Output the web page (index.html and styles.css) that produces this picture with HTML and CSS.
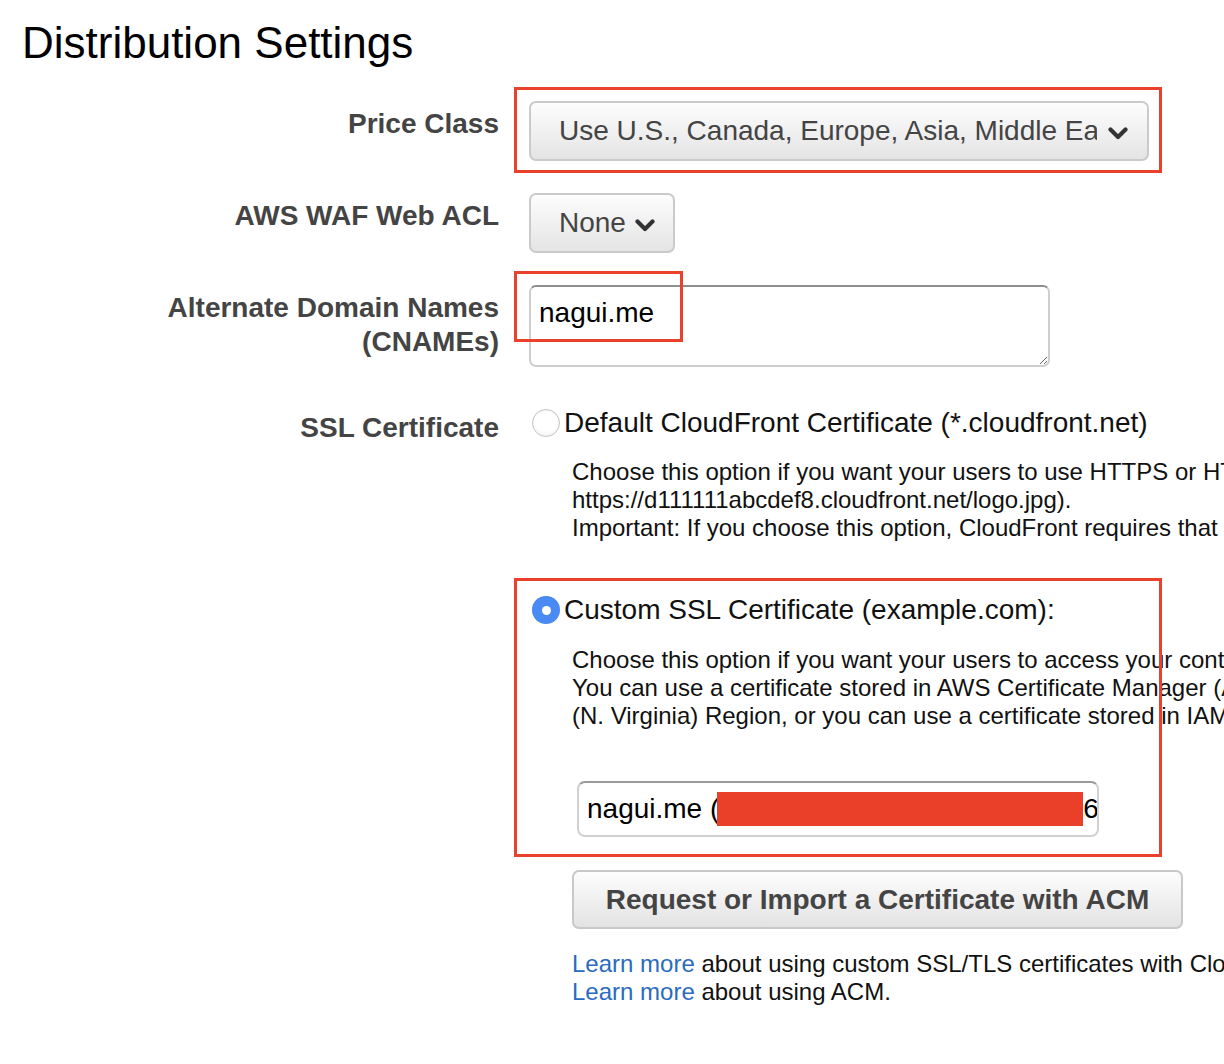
FILE: index.html
```html
<!DOCTYPE html>
<html lang="en">
<head>
<meta charset="utf-8">
<title>Distribution Settings</title>
<link rel="stylesheet" href="styles.css">
</head>
<body>
<h1 class="title">Distribution Settings</h1>
<div class="form">
  <div class="row row-price">
    <div class="label">Price Class</div>
    <div class="field">
      <div class="select-wrap">
        <div class="select select-wide">
          <span class="select-text">Use U.S., Canada, Europe, Asia, Middle East and Africa</span>
          <svg class="chev" viewBox="0 0 20 14" width="20" height="14"><path d="M2.5 3.5 L10 11 L17.5 3.5" fill="none" stroke="#333" stroke-width="4.2" stroke-linecap="round" stroke-linejoin="round"/></svg>
        </div>
        <div class="mark mark-price"></div>
      </div>
    </div>
  </div>

  <div class="row row-waf">
    <div class="label">AWS WAF Web ACL</div>
    <div class="field">
      <div class="select select-none">
        <span class="select-text">None</span>
        <svg class="chev" viewBox="0 0 20 14" width="20" height="14"><path d="M2.5 3.5 L10 11 L17.5 3.5" fill="none" stroke="#333" stroke-width="4.2" stroke-linecap="round" stroke-linejoin="round"/></svg>
      </div>
    </div>
  </div>

  <div class="row row-cname">
    <div class="label">Alternate Domain Names<br>(CNAMEs)</div>
    <div class="field">
      <div class="textarea-wrap">
        <textarea class="cnames">nagui.me</textarea>
        <div class="mark mark-cname"></div>
      </div>
    </div>
  </div>

  <div class="row row-ssl">
    <div class="label label-ssl">SSL Certificate</div>
    <div class="field">
      <div class="radio-line">
        <span class="radio"></span>
        <span class="radio-label">Default CloudFront Certificate (*.cloudfront.net)</span>
      </div>
      <div class="desc desc-default">
        <div>Choose this option if you want your users to use HTTPS or HTTP to access your content with the CloudFront domain name (such as</div>
        <div>https://d111111abcdef8.cloudfront.net/logo.jpg).</div>
        <div>Important: If you choose this option, CloudFront requires that the browser or device support TLSv1 or later to access your content.</div>
      </div>

      <div class="custom">
        <div class="radio-line">
          <span class="radio radio-on"><span class="dot"></span></span>
          <span class="radio-label">Custom SSL Certificate (example.com):</span>
        </div>
        <div class="desc desc-custom">
          <div>Choose this option if you want your users to access your content by using an alternate domain name, such as https://www.example.com/logo.jpg.</div>
          <div>You can use a certificate stored in AWS Certificate Manager (ACM) in the US East</div>
          <div>(N. Virginia) Region, or you can use a certificate stored in IAM.</div>
        </div>
        <div class="cert-input">
          <span class="cert-text">nagui.me (</span><span class="redact"></span><span class="cert-text">6</span>
        </div>
        <div class="mark mark-custom"></div>
      </div>

      <div class="acm-button">Request or Import a Certificate with ACM</div>

      <div class="desc links">
        <div><a class="link" href="#">Learn more</a> about using custom SSL/TLS certificates with CloudFront.</div>
        <div><a class="link" href="#">Learn more</a> about using ACM.</div>
      </div>
    </div>
  </div>
</div>
</body>
</html>
```

FILE: styles.css
```css
html, body {
  margin: 0;
  padding: 0;
  overflow: hidden;
  background: #fff;
}

body {
  font-family: "Liberation Sans", Arial, Helvetica, sans-serif;
  color: #000;
  width: 1224px;
  height: 1064px;
}

.title {
  margin: 0;
  padding: 18px 0 0 22px;
  font-size: 44px;
  line-height: 50px;
  font-weight: normal;
  color: #000;
}

.form {
  padding-top: 33px;
}

.row {
  display: grid;
  grid-template-columns: 499px 1fr;
  column-gap: 30px;
  align-items: start;
}

.row + .row {
  margin-top: 32px;
}

.row.row-ssl {
  margin-top: 39px;
}

.label {
  text-align: right;
  font-size: 28px;
  line-height: 34px;
  font-weight: bold;
  color: #444;
  padding-top: 6px;
  white-space: nowrap;
}

.label-ssl {
  padding-top: 5px;
}

.field {
  min-width: 0;
}

/* selects */
.select-wrap {
  position: relative;
  width: 620px;
}

.select {
  box-sizing: border-box;
  height: 60px;
  display: flex;
  align-items: center;
  padding: 0 17px 0 28px;
  border: 2px solid #cacaca;
  border-radius: 7px;
  background: linear-gradient(#fdfdfd, #e4e4e4);
  color: #444;
  font-size: 28px;
}

.select-wide {
  width: 620px;
}

.select-none {
  width: 146px;
}

.select-text {
  white-space: nowrap;
  overflow: hidden;
}

.select-wide .select-text {
  width: 538px;
  flex: none;
  margin-right: 11px;
}

.select-none .select-text {
  flex: none;
  overflow: visible;
  margin-right: 9px;
}

.chev {
  flex: none;
  display: block;
  margin-top: 3px;
}

.mark {
  position: absolute;
  box-sizing: border-box;
  border: 3px solid #e9412b;
  pointer-events: none;
}

.mark-price {
  left: -15px;
  top: -14px;
  width: 648px;
  height: 86px;
}

/* textarea */
.textarea-wrap {
  position: relative;
  width: 521px;
  height: 82px;
}

.cnames {
  box-sizing: border-box;
  display: block;
  width: 521px;
  height: 82px;
  margin: 0;
  padding: 9px 8px;
  border: 2px solid #cfcfcf;
  border-top-color: #8e8e8e;
  border-radius: 7px;
  font-family: "Liberation Sans", Arial, Helvetica, sans-serif;
  font-size: 28px;
  line-height: 34px;
  color: #000;
  background: #fff;
  resize: both;
  outline: none;
}

.mark-cname {
  left: -15px;
  top: -14px;
  width: 169px;
  height: 71px;
}

/* radios */
.radio-line {
  display: flex;
  align-items: center;
  height: 34px;
  white-space: nowrap;
}

.radio {
  box-sizing: border-box;
  flex: none;
  width: 28px;
  height: 28px;
  margin-left: 3px;
  margin-right: 4px;
  border-radius: 50%;
  border: 1.5px solid #c4c4c4;
  background: radial-gradient(circle at 50% 35%, #ffffff 55%, #ececec 100%);
  box-shadow: inset 0 1px 1px rgba(0,0,0,0.05);
  display: flex;
  align-items: center;
  justify-content: center;
}

.radio-on {
  border: none;
  background: #4a8af4;
}

.dot {
  width: 9px;
  height: 9px;
  border-radius: 50%;
  background: #fff;
}

.radio-label {
  font-size: 28px;
  color: #111;
}

.desc {
  margin-left: 43px;
  font-size: 24px;
  line-height: 28px;
  color: #111;
  white-space: nowrap;
}

.desc-default {
  margin-top: 18px;
}

.custom {
  position: relative;
  margin-top: 51px;
}

.desc-custom {
  margin-top: 19px;
}

.cert-input {
  box-sizing: border-box;
  width: 522px;
  height: 56px;
  margin-top: 51px;
  margin-left: 48px;
  padding: 0 9px 0 8px;
  border: 2px solid #d0d0d0;
  border-top-color: #9a9a9a;
  border-radius: 8px;
  display: flex;
  align-items: center;
  overflow: hidden;
  white-space: nowrap;
  font-size: 28px;
  color: #000;
}

.redact {
  flex: none;
  display: block;
  width: 366px;
  height: 34px;
  margin-left: -2px;
  background: #ea4029;
}

.mark-custom {
  left: -15px;
  top: -15px;
  width: 648px;
  bottom: -20px;
}

.acm-button {
  box-sizing: border-box;
  width: 611px;
  height: 59px;
  margin-top: 33px;
  margin-left: 43px;
  border: 2px solid #c8c8c8;
  border-radius: 7px;
  background: linear-gradient(#fdfdfd, #e3e3e3);
  color: #444;
  font-size: 28px;
  font-weight: bold;
  display: flex;
  align-items: center;
  justify-content: center;
  white-space: nowrap;
}

.links {
  margin-top: 21px;
}

.link {
  color: #2a6bc0;
  text-decoration: none;
}
```
